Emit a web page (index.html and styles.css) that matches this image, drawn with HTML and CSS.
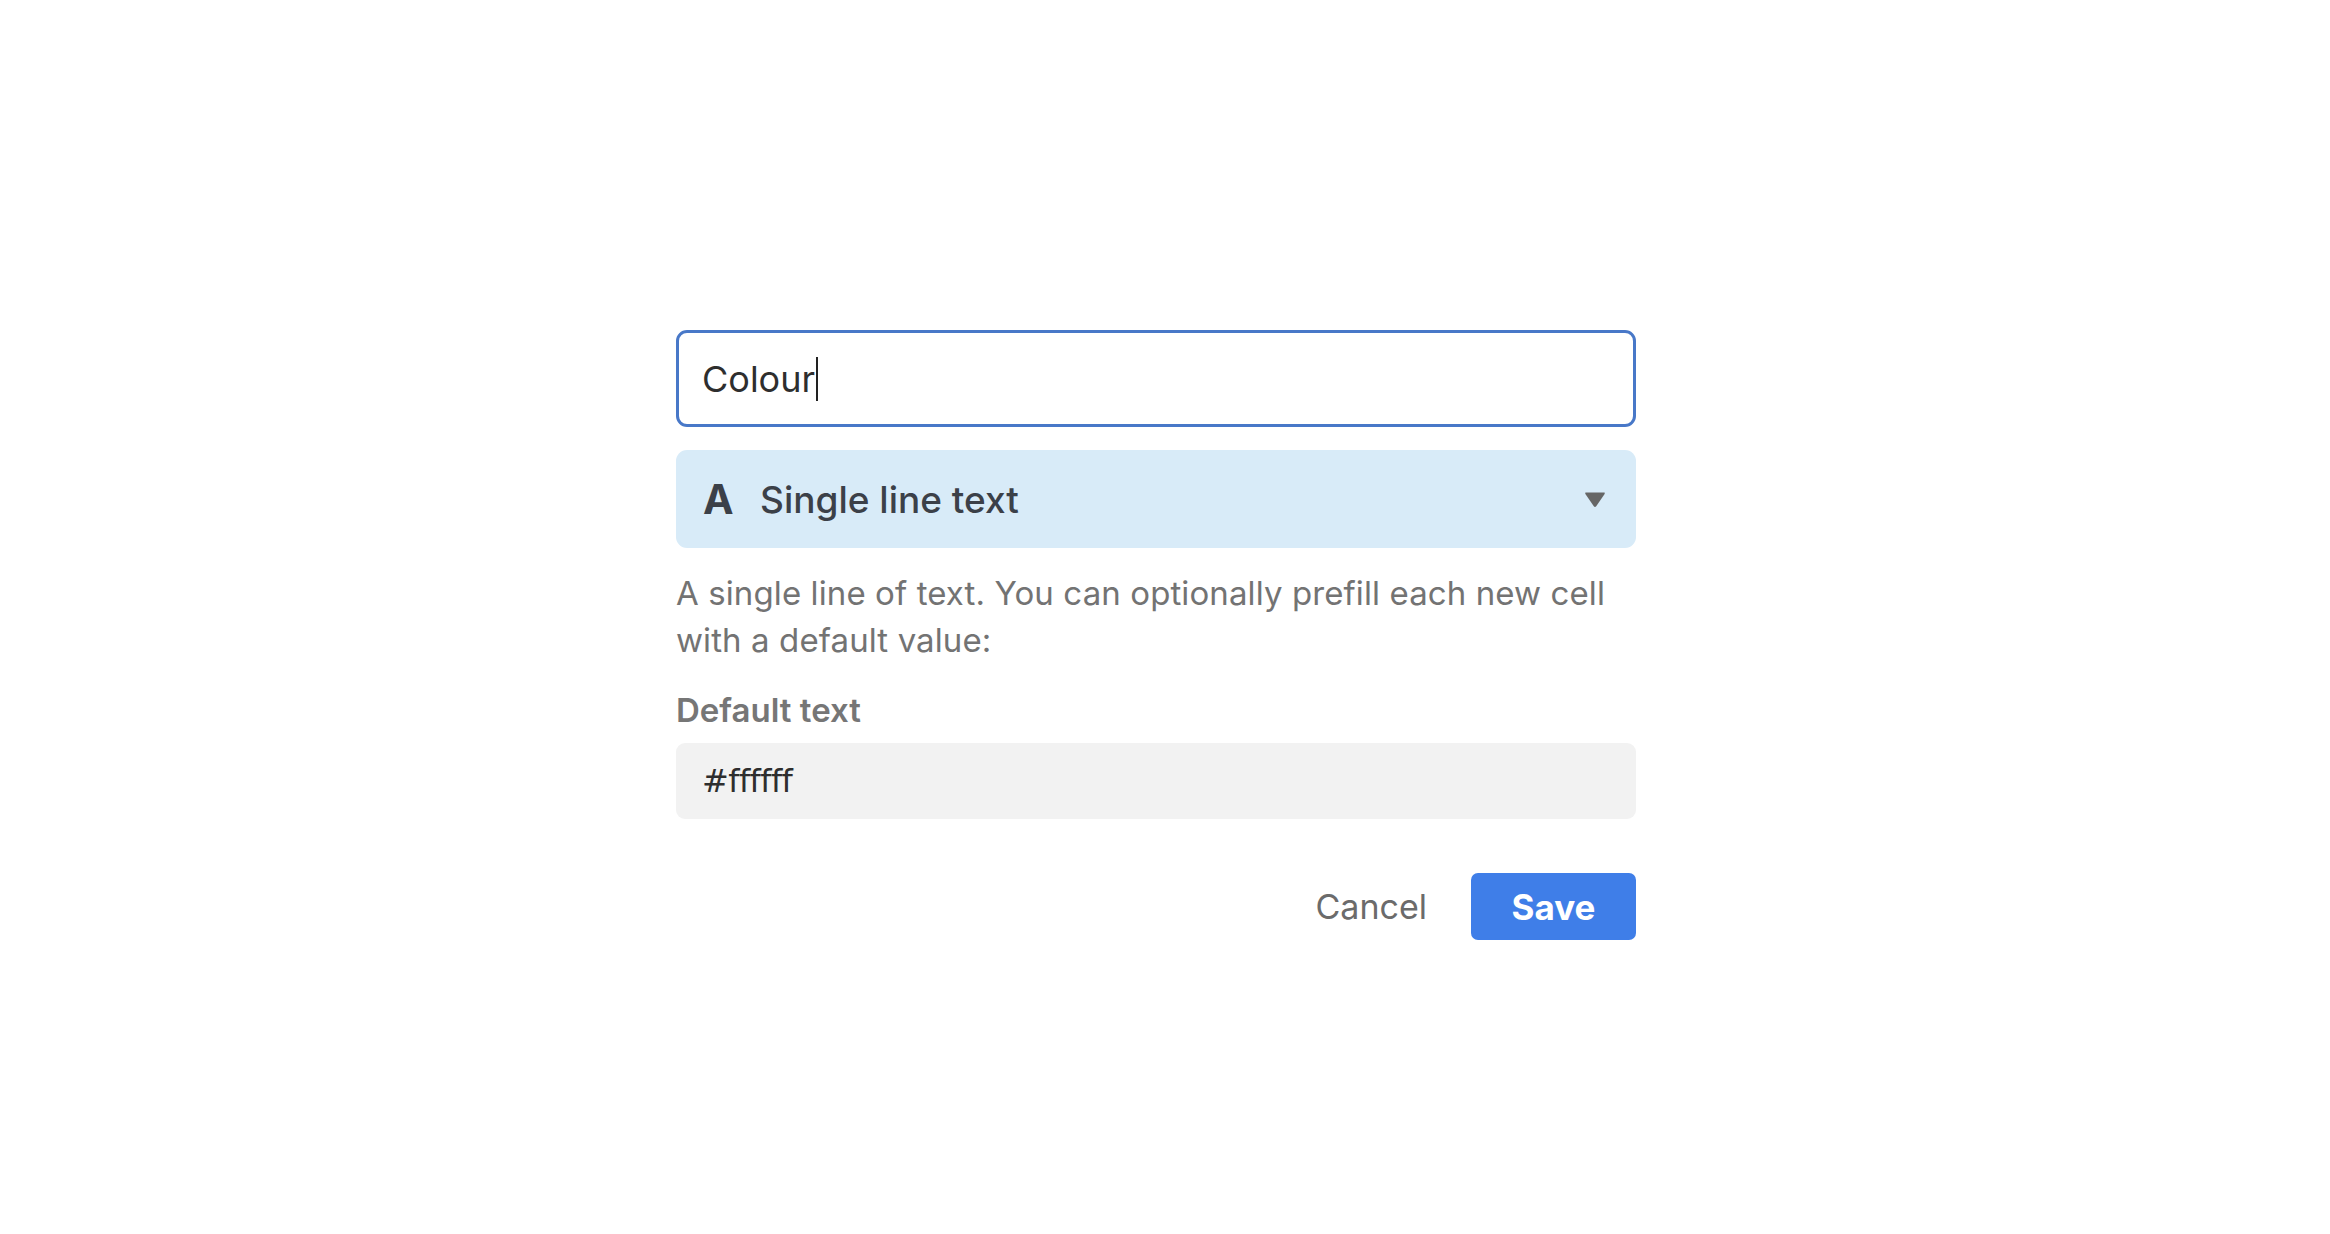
FILE: index.html
```html
<!DOCTYPE html>
<html lang="en">
<head>
<meta charset="utf-8">
<title>Field editor</title>
<link rel="stylesheet" href="styles.css">
</head>
<body>
<div class="dialog">
  <div class="name-input">
    <span class="name-value">Colour</span><span class="caret"></span>
  </div>
  <div class="type-select">
    <span class="type-icon">A</span>
    <span class="type-label">Single line text</span>
    <svg class="type-arrow" width="22" height="17" viewBox="0 0 22 17"><path d="M2 1.5 H20 Q21.5 1.5 20.6 2.9 L12.2 15.2 Q11 16.8 9.8 15.2 L1.4 2.9 Q0.5 1.5 2 1.5 Z" fill="#666"/></svg>
  </div>
  <p class="description">A single line of text. You can optionally prefill each new cell with a default value:</p>
  <div class="field-label">Default text</div>
  <div class="default-input">#ffffff</div>
  <div class="actions">
    <button class="btn-cancel">Cancel</button>
    <button class="btn-save">Save</button>
  </div>
</div>
</body>
</html>
```
FILE: styles.css
```css
html, body {
  margin: 0;
  padding: 0;
  background: #ffffff;
}
body {
  font-family: Inter, "Noto Sans", "Liberation Sans", sans-serif;
  padding-top: 330px;
}
.dialog {
  width: 960px;
  margin-left: 676px;
  display: flex;
  flex-direction: column;
}
.name-input {
  box-sizing: border-box;
  height: 97px;
  border: 3.5px solid #4878c8;
  border-radius: 11px;
  display: flex;
  align-items: center;
  padding-left: 23px;
  color: #2e2e2e;
  font-size: 36px;
}
.caret {
  display: inline-block;
  width: 2px;
  height: 44px;
  background: #222;
  margin-left: 1px;
}
.type-select {
  margin-top: 23px;
  box-sizing: border-box;
  height: 98px;
  background: #d8ebf8;
  border-radius: 11px;
  display: flex;
  align-items: center;
  padding: 0 30px 0 27px;
  color: #3b4048;
}
.type-icon {
  font-size: 41px;
  font-weight: 700;
  width: 33px;
}
.type-label {
  margin-left: 24px;
  font-size: 37px;
  font-weight: 500;
  flex: 1;
}
.type-arrow {
  display: block;
}
.description {
  margin: 22px 0 0;
  font-size: 33px;
  letter-spacing: 0.1px;
  line-height: 47px;
  color: #737373;
}
.field-label {
  margin-top: 26px;
  font-size: 33px;
  font-weight: 600;
  color: #767676;
  line-height: 40px;
}
.default-input {
  margin-top: 13px;
  box-sizing: border-box;
  height: 76px;
  background: #f2f2f2;
  border-radius: 9px;
  display: flex;
  align-items: center;
  padding-left: 26px;
  font-family: "DejaVu Sans", sans-serif;
  font-size: 32px;
  letter-spacing: -0.6px;
  color: #2e2e2e;
}
.actions {
  margin-top: 54px;
  display: flex;
  justify-content: flex-end;
  align-items: center;
}
.btn-cancel {
  font-family: inherit;
  background: none;
  border: none;
  padding: 0;
  font-size: 34px;
  color: #6b6b6b;
  margin-right: 44px;
}
.btn-save {
  font-family: inherit;
  width: 165px;
  height: 67px;
  border: none;
  border-radius: 7px;
  background: #3f7ee8;
  color: #ffffff;
  font-size: 35px;
  font-weight: 700;
  padding: 0;
}
```
